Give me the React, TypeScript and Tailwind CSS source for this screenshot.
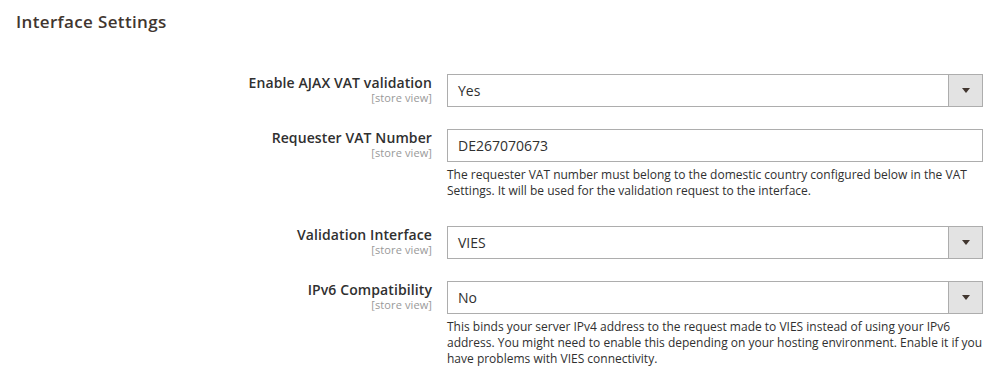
import React from "react";

interface FieldProps {
  label: string;
  value: string;
  select?: boolean;
  note?: string;
  noteClass?: string;
}

const SelectArrow: React.FC = () => (
  <div className="flex h-full w-[34px] items-center justify-center border-l border-[#adadad] bg-[#e3e3e3]">
    <span className="h-0 w-0 border-x-[4px] border-t-[5px] border-x-transparent border-t-[#41362f]" />
  </div>
);

const Field: React.FC<FieldProps> = ({ label, value, select, note, noteClass }) => (
  <div className="flex items-start">
    <div className="w-[432px] text-right">
      <div className="text-[14px] font-semibold leading-[18px] tracking-[0.1px] text-[#303030]">
        {label}
      </div>
      <div className="text-[11px] leading-[12px] tracking-[0.1px] text-[#999999]">
        [store view]
      </div>
    </div>
    <div className="ml-[15px] w-[536px]">
      <div className="flex h-[33px] items-center border border-[#adadad] bg-white">
        <span className="flex-1 pl-[10px] text-[14px] text-[#303030]">{value}</span>
        {select && <SelectArrow />}
      </div>
      {note && (
        <p className={`mt-[5px] text-[12px] leading-[16px] text-[#303030] ${noteClass ?? ""}`}>
          {note}
        </p>
      )}
    </div>
  </div>
);

export default function App() {
  return (
    <div
      className="h-[387px] w-[1005px] bg-white"
      style={{ fontFamily: '"Open Sans", "Liberation Sans", sans-serif' }}
    >
      <h2 className="pl-[16px] pt-[12px] text-[17px] font-semibold leading-[20px] tracking-[0.35px] text-[#41362f]">
        Interface Settings
      </h2>

      <div className="mt-[42px] flex flex-col">
        <Field label="Enable AJAX VAT validation" value="Yes" select />
        <div className="h-[22px]" />
        <Field
          label="Requester VAT Number"
          value="DE267070673"
          note="The requester VAT number must belong to the domestic country configured below in the VAT Settings. It will be used for the validation request to the interface."
          noteClass="mb-[5px]"
        />
        <div className="h-[22px]" />
        <Field label="Validation Interface" value="VIES" select />
        <div className="h-[22px]" />
        <Field
          label="IPv6 Compatibility"
          value="No"
          select
          note="This binds your server IPv4 address to the request made to VIES instead of using your IPv6 address. You might need to enable this depending on your hosting environment. Enable it if you have problems with VIES connectivity."
        />
      </div>
    </div>
  );
}
